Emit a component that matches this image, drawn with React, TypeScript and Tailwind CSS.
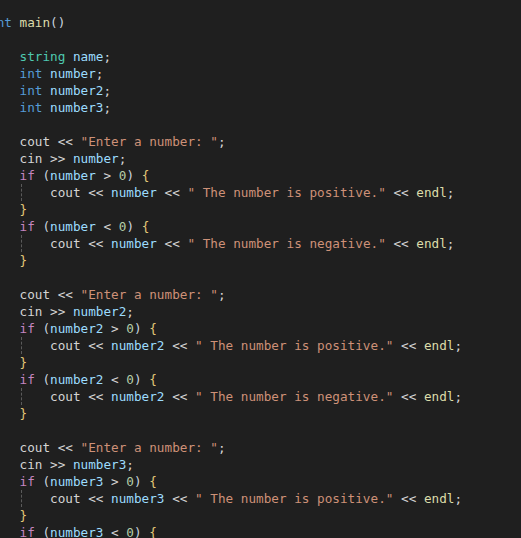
type Tok = [string, string];

const C = {
  kw: "text-[#569cd6]",
  type: "text-[#4ec9b0]",
  v: "text-[#9cdcfe]",
  fn: "text-[#dcdcaa]",
  p: "text-[#d4d4d4]",
  s: "text-[#ce9178]",
  n: "text-[#b5cea8]",
  ctl: "text-[#c586c0]",
  par: "text-[#c8d3df]",
  br: "text-[#e3c878]",
};

const enterBlock = (name: string): { indent: number; guide?: boolean; toks: Tok[] }[] => [
  { indent: 4, toks: [["cout", C.p], [" << ", C.p], ['"Enter a number: "', C.s], [";", C.p]] },
  { indent: 4, toks: [["cin", C.p], [" >> ", C.p], [name, C.v], [";", C.p]] },
  ...(["positive", "negative"] as const).flatMap((kind) => [
    {
      indent: 4,
      toks: [
        ["if", C.ctl],
        [" ", C.p],
        ["(", C.par],
        [name, C.v],
        [kind === "positive" ? " > " : " < ", C.p],
        ["0", C.n],
        [")", C.par],
        [" ", C.p],
        ["{", C.br],
      ] as Tok[],
    },
    {
      indent: 8,
      guide: true,
      toks: [
        ["cout", C.p],
        [" << ", C.p],
        [name, C.v],
        [" << ", C.p],
        [`" The number is ${kind}."`, C.s],
        [" << ", C.p],
        ["endl", C.fn],
        [";", C.p],
      ] as Tok[],
    },
    { indent: 4, toks: [["}", C.br]] as Tok[] },
  ]),
];

const lines: { indent: number; guide?: boolean; toks: Tok[] }[] = [
  { indent: 0, toks: [["int", C.kw], [" ", C.p], ["main", C.fn], ["()", C.par]] },
  { indent: 0, toks: [["{", C.br]] },
  { indent: 4, toks: [["string", C.type], [" ", C.p], ["name", C.v], [";", C.p]] },
  { indent: 4, toks: [["int", C.kw], [" ", C.p], ["number", C.v], [";", C.p]] },
  { indent: 4, toks: [["int", C.kw], [" ", C.p], ["number2", C.v], [";", C.p]] },
  { indent: 4, toks: [["int", C.kw], [" ", C.p], ["number3", C.v], [";", C.p]] },
  { indent: 0, toks: [] },
  ...enterBlock("number"),
  { indent: 0, toks: [] },
  ...enterBlock("number2"),
  { indent: 0, toks: [] },
  ...enterBlock("number3"),
];

export default function App() {
  return (
    <div className="w-[521px] h-[538px] bg-[#1f1f1f] overflow-hidden">
      <div
        className="pt-[13.5px] ml-[-11px] text-[12.68px] leading-[17px] whitespace-pre"
        style={{ fontFamily: '"DejaVu Sans Mono", "Liberation Mono", monospace' }}
      >
        {lines.map((line, i) => (
          <div key={i} className="h-[17px] flex">
            {line.indent > 0 && <span className="w-[4ch] shrink-0" />}
            {line.indent > 4 &&
              (line.guide ? (
                <span className="w-[4ch] shrink-0 flex pl-[1.5px]">
                  <span className="w-px h-full border-l border-dashed border-[#5a5a5a]" />
                </span>
              ) : (
                <span className="w-[4ch] shrink-0" />
              ))}
            <span>
              {line.toks.map(([t, cls], j) => (
                <span key={j} className={cls}>
                  {t}
                </span>
              ))}
            </span>
          </div>
        ))}
      </div>
    </div>
  );
}
